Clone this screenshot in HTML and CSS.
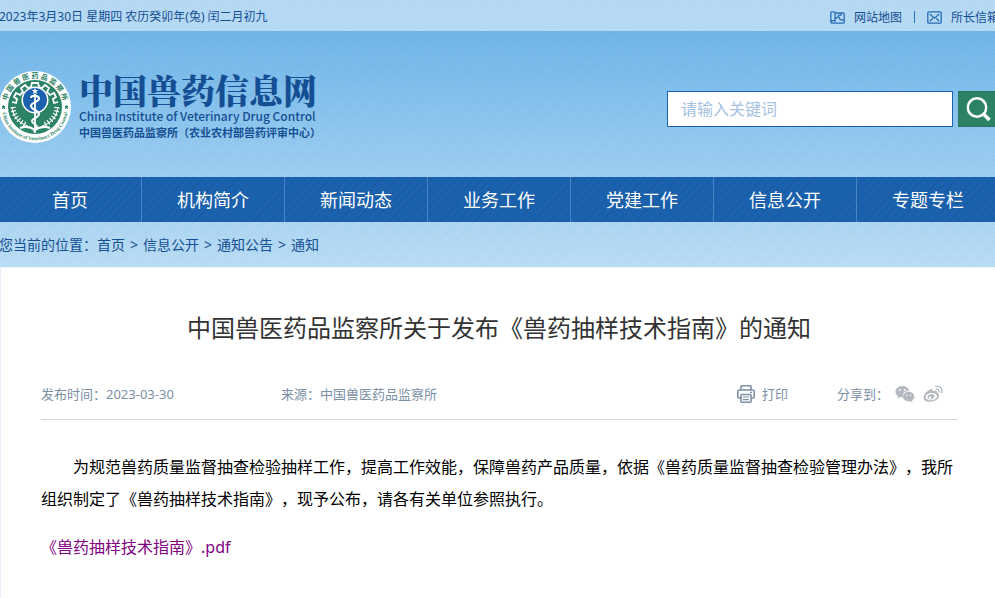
FILE: index.html
```html
<!DOCTYPE html>
<html lang="zh-CN">
<head>
<meta charset="utf-8">
<meta name="viewport" content="width=device-width, initial-scale=1">
<title>中国兽药信息网</title>
<link rel="stylesheet" href="styles.css">
</head>
<body>
<div class="masthead">
  <div class="topbar">
    <div class="wrap topbar-inner">
      <span class="date">2023年3月30日 星期四 农历癸卯年(兔) 闰二月初九</span>
      <div class="toplinks">
        <a href="#"><svg width="15" height="13" viewBox="0 0 15 13" fill="none" stroke="currentColor" stroke-width="1.3"><path d="M5 11V1.700Q5 .8 4 .8H1.800q-1 0-1 1v8.400q0 2 2 2h10.400q1 0 1-1V3q0-1-1-1H5M.8 11q0-1.300 1.500-1.300H5M5 8l3.500-2.500L10 8.500l4 .8M8.500 5.500V4.200H11V2"/></svg>网站地图</a>
        <span class="divider"></span>
        <a href="#"><svg width="15" height="13" viewBox="0 0 15 13" fill="none" stroke="currentColor" stroke-width="1.3"><rect x=".8" y=".8" width="13.4" height="11.4" rx="1"/><path d="M2.8 3l4.7 4.2L12.2 3M2.8 10.3l3-3M12.2 10.3l-3-3"/></svg>所长信箱</a>
      </div>
    </div>
  </div>
  <header class="wrap header">
    <a class="brand" href="#">
      <svg class="emblem" width="72" height="72" viewBox="0 0 72 72">
        <defs>
          <path id="arc-top" d="M8 41A28.500 28.500 0 1 1 64 41"/>
          <path id="arc-bottom" d="M3.5 42A33 33 0 0 0 68.5 42"/>
        </defs>
        <circle cx="36" cy="36" r="36" fill="#fff"/>
        <circle cx="36" cy="36" r="27" fill="#2b8265"/>
        <path d="M13 31l4 1 1-4-3-2 2-4 4 2 3-3-2-4 4-3 3 3 3-1 1-4h6l1 4 3 1 3-3 4 3-2 4 3 3 4-2 2 4-3 2 1 4 4-1" fill="none" stroke="#fff" stroke-width="1.800"/>
        <circle cx="36" cy="29" r="13.5" fill="#fff"/>
        <circle cx="36" cy="29" r="12" fill="#1c61ad"/>
        <path d="M36 16.500l.8 2.500h2.600l-2.100 1.600.8 2.600-2.100-1.500-2.100 1.500.8-2.600-2.100-1.600h2.600z" fill="#fff"/>
        <path d="M36 23v39" stroke="#fff" stroke-width="1.800"/>
        <path d="M32 27c0-3 7-3 8 0 1 4-8 4-8 8s8 4 8 8-7 4-7 7 5 3 5 6-3 3-3 5" fill="none" stroke="#fff" stroke-width="2"/>
        <path d="M13 37q2 14 16 18M59 37q-2 14-16 18" fill="none" stroke="#fff" stroke-width="1"/>
        <path d="M14 36q1 13 14 18M58 36q-1 13-14 18" fill="none" stroke="#fff" stroke-width="5" stroke-dasharray="1.200 2.300"/>
        <path d="M21 57q8-3 15 2 7-5 15-2" fill="none" stroke="#fff" stroke-width="2"/>
        <path d="M3 35.500h3l-2.500 2 1-3 1 3zM66 35.500h3l-2.500 2 1-3 1 3z" fill="#2b8265" stroke="#2b8265"/>
        <text class="ring-cn"><textPath href="#arc-top" startOffset="50%" text-anchor="middle">中 国 兽 医 药 品 监 察 所</textPath></text>
        <text class="ring-en"><textPath href="#arc-bottom" startOffset="50%" text-anchor="middle">China Institute of Veterinary Drug Control</textPath></text>
      </svg>
      <span class="brand-text">
        <span class="brand-name">中国兽药信息网</span>
        <span class="brand-en">China Institute of Veterinary Drug Control</span>
        <span class="brand-org">中国兽医药品监察所（农业农村部兽药评审中心）</span>
      </span>
    </a>
    <form class="search">
      <input type="text" aria-label="请输入关键词" placeholder="请输入关键词">
      <button type="button" aria-label="搜索"><svg width="26" height="26" viewBox="0 0 26 26" fill="none" stroke="#fff" stroke-width="2.500"><circle cx="11" cy="11.500" r="9.200"/><path d="M17.500 18l6 6" stroke-width="3.500"/></svg></button>
    </form>
  </header>
  <nav class="nav">
    <ul class="wrap nav-list">
      <li><a href="#">首页</a></li>
      <li><a href="#">机构简介</a></li>
      <li><a href="#">新闻动态</a></li>
      <li><a href="#">业务工作</a></li>
      <li><a href="#">党建工作</a></li>
      <li><a href="#">信息公开</a></li>
      <li><a href="#">专题专栏</a></li>
    </ul>
  </nav>
  <div class="wrap crumbs">您当前的位置：<a href="#">首页</a><span>&gt;</span><a href="#">信息公开</a><span>&gt;</span><a href="#">通知公告</a><span>&gt;</span><a href="#">通知</a></div>
</div>
<main class="article">
  <h1>中国兽医药品监察所关于发布《兽药抽样技术指南》的通知</h1>
  <div class="meta">
    <span class="published">发布时间：2023-03-30</span>
    <span class="source">来源：中国兽医药品监察所</span>
    <button class="print" type="button"><svg width="18" height="18" viewBox="0 0 18 18" fill="none" stroke="currentColor" stroke-width="1.600"><path d="M4 5V1.500q0-.7.700-.7h8.600q.7 0 .7.700V5M4 13H2q-1.200 0-1.200-1.200V6.500Q.8 5 2.300 5h13.400q1.500 0 1.500 1.500v5.300Q17.200 13 16 13h-2"/><rect x="4" y="9.500" width="10" height="7.700" rx=".7"/><path d="M6 12h6M6 14.600h6M13 7.300h2" stroke-width="1.200"/></svg>打印</button>
    <div class="share">
      <span>分享到：</span>
      <a href="#" aria-label="微信"><svg width="20" height="18" viewBox="0 0 20 18"><path d="M7.300 1C3.500 1 .5 3.500.5 6.700c0 1.800 1 3.400 2.500 4.500l-.6 2.200 2.500-1.300c.8.200 1.500.3 2.400.3h.5C7 8.500 10 5.800 13.900 5.800h.2C13.400 3 10.600 1 7.300 1z" fill="currentColor"/><path d="M13.700 6.700c-3.200 0-5.700 2.200-5.700 4.900s2.500 4.900 5.700 4.900c.7 0 1.300-.1 1.900-.3l2 1.100-.5-1.900c1.400-.9 2.300-2.300 2.300-3.800 0-2.700-2.500-4.900-5.700-4.900z" fill="currentColor"/><g fill="#fff"><circle cx="5" cy="5" r=".9"/><circle cx="9.700" cy="5" r=".9"/><circle cx="11.900" cy="10.200" r=".8"/><circle cx="15.600" cy="10.200" r=".8"/></g></svg></a>
      <a href="#" aria-label="微博"><svg width="20" height="18" viewBox="0 0 20 18"><path fill="currentColor" fill-rule="evenodd" d="M7.800 4.200C9.200 3.700 9.900 4.600 9.400 6.300c2.700-1.100 5-.9 4.500 1.400 2.800.9 2.900 4.100.6 6.300C10.500 17.800.6 18 .6 12.500c0-3 4.200-7.500 7.200-8.300zM8.200 8C5 8.100 2.600 10 2.700 12.200c.2 2.100 2.800 3.400 6 3.100s5.600-2.300 5.400-4.300S11.300 7.900 8.200 8z"/><path fill="currentColor" fill-rule="evenodd" d="M8 9c-2.400.2-3.900 2-3.400 3.700.5 1.600 2.700 2.200 4.600 1.300 1.900-.9 2.700-2.800 1.800-4C10.400 9.200 9.300 8.900 8 9zm-1 2.500a1.200 1.200 0 1 1 0 2.400 1.200 1.200 0 0 1 0-2.400z"/><path d="M13 1.500c3.600-.9 6.800 2 5.600 6M13.200 4.300c1.900-.5 3.300.9 2.700 2.800" fill="none" stroke="currentColor" stroke-width="1.300" stroke-linecap="round"/></svg></a>
    </div>
  </div>
  <p>为规范兽药质量监督抽查检验抽样工作，提高工作效能，保障兽药产品质量，依据《兽药质量监督抽查检验管理办法》，我所组织制定了《兽药抽样技术指南》，现予公布，请各有关单位参照执行。</p>
  <a class="attachment" href="#">《兽药抽样技术指南》.pdf</a>
</main>
</body>
</html>
```
FILE: styles.css
```css
* { box-sizing: border-box; }

body {
  margin: 0;
  overflow-x: hidden;
  background: #fff;
  color: #000;
  font-family: "Noto Sans", "Noto Sans CJK SC", sans-serif;
  font-size: 14px;
  text-spacing-trim: space-all;
}

a { color: inherit; text-decoration: none; }
svg { display: block; flex: none; }
button, input { font: inherit; }

.wrap { margin: 0 -5px 0 -1px; }

.masthead {
  color: #154f93;
  background:
    repeating-linear-gradient(135deg, rgba(30, 100, 170, 0.05) 0 1px, transparent 1px 3px),
    linear-gradient(#6bb3e8, #70b6e9 31px, #a0cff1 177px, #bcdef5);
}

.topbar { background: rgba(255, 255, 255, 0.5); font-size: 12px; }

.topbar-inner {
  display: flex;
  justify-content: space-between;
  align-items: center;
  height: 31px;
}

.toplinks { display: flex; align-items: center; padding: 3px 1px 0 0; }
.toplinks a { display: flex; align-items: center; gap: 9px; }
.toplinks svg { color: #2a6db5; }
.divider { width: 1px; height: 12px; margin: 0 12px; background: #2a74bd; }

.header {
  display: flex;
  justify-content: space-between;
  align-items: center;
  height: 146px;
}

.brand { display: flex; align-items: center; gap: 8px; padding-top: 6px; }
.ring-cn { font-size: 7px; font-weight: 700; fill: #2b8265; }
.ring-en { font-family: "Liberation Serif", serif; font-size: 5px; font-weight: 700; fill: #2b8265; }

.brand-text { display: flex; flex-direction: column; white-space: nowrap; }
.brand-name {
  font-family: "Noto Serif CJK SC", "Noto Sans CJK SC", serif;
  font-size: 34px;
  font-weight: 900;
  line-height: 36px;
}
.brand-en { font-family: "Noto Sans CJK SC", sans-serif; font-size: 12px; font-weight: 500; line-height: 16px; }
.brand-org { font-size: 11px; font-weight: 700; line-height: 18px; }

.search { display: flex; gap: 5px; margin-bottom: -10px; }
.search input {
  width: 286px;
  height: 36px;
  padding: 0 13px;
  border: 1px solid #1b62ad;
  background: #fff;
  font-size: 16px;
}
.search input::placeholder { color: #a5c1e0; }
.search button {
  display: grid;
  place-items: center;
  width: 42px;
  height: 36px;
  padding: 0;
  border: 1px solid #2c7465;
  background: #2b8265;
}

.nav {
  background:
    repeating-linear-gradient(135deg, rgba(20, 60, 110, 0.18) 0 1px, transparent 1px 6px),
    #1a61ae;
  color: #fff;
}
.nav-list { display: flex; padding: 0; list-style: none; }
.nav-list li { flex: 1; border-right: 1px solid #4985c5; }
.nav-list a { display: block; padding-top: 1px; font-size: 18px; line-height: 44px; text-align: center; }

.crumbs { line-height: 45px; }
.crumbs span { margin: 0 5px; }

.article {
  margin-right: -5px;
  padding: 40px 43px 40px 40px;
  border-top: 1px solid #f2f7fd;
  border-left: 1px solid #e9effa;
}
.article h1 {
  margin: 0;
  color: #333;
  font-size: 24px;
  font-weight: 400;
  line-height: 40px;
  text-align: center;
}

.meta {
  display: flex;
  align-items: center;
  height: 52px;
  margin-top: 20px;
  border-bottom: 1px solid #c9d5e0;
  color: #7b8fa5;
  font-size: 13px;
}
.published { flex: 0 0 240px; }
.source { flex: 1; }
.print {
  display: flex;
  align-items: center;
  gap: 7px;
  padding: 0;
  border: 0;
  background: none;
  color: inherit;
}
.share { display: flex; align-items: center; gap: 8px; margin: 0 14px 0 49px; }
.share span { margin-right: -2px; }
.share a { color: #b3b9bf; }

.article p {
  margin: 31px 0 16px;
  font-size: 16px;
  line-height: 32px;
  text-indent: 2em;
}
.attachment { color: #800080; font-size: 16px; line-height: 32px; }
```
